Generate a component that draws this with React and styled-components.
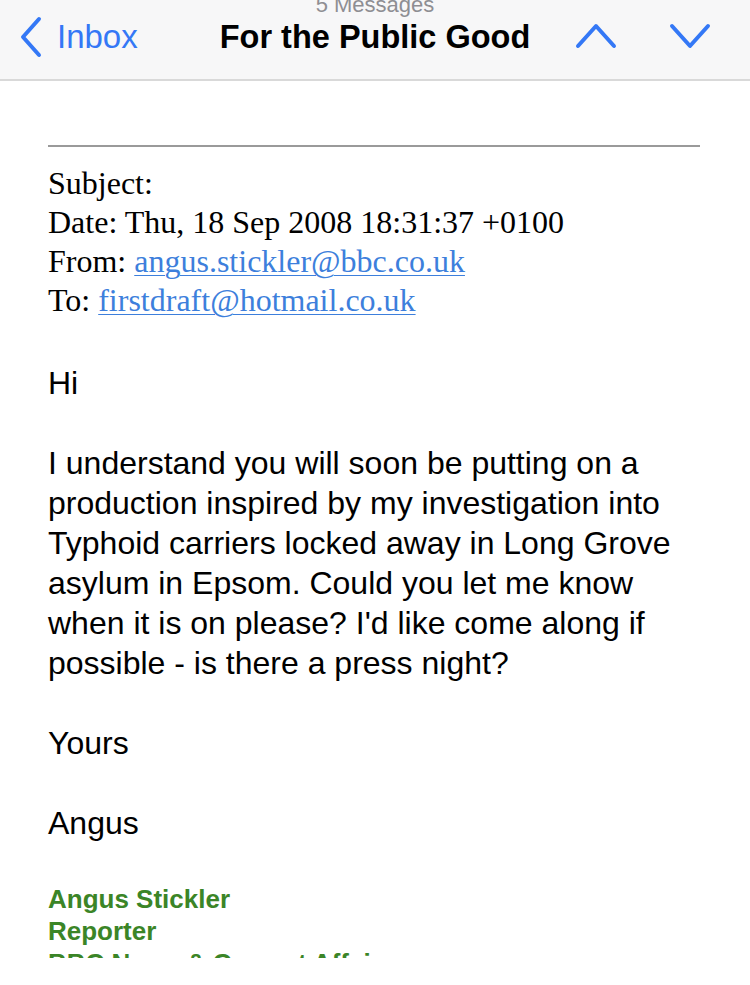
import React from 'react';
import styled, { createGlobalStyle } from 'styled-components';

const GlobalStyle = createGlobalStyle`
  html, body {
    margin: 0;
    padding: 0;
    background: #ffffff;
  }
`;

const Chevron = ({ dir }) => {
  const paths = {
    left: 'M22 4 L6 22 L22 40',
    up: 'M3 24 L21 4 L39 24',
    down: 'M3 4 L21 24 L39 4',
  };
  const size = dir === 'left' ? { w: 26, h: 44 } : { w: 42, h: 28 };
  return (
    <svg width={size.w} height={size.h} viewBox={`0 0 ${size.w} ${size.h}`}>
      <path
        d={paths[dir]}
        fill="none"
        stroke="#3478f6"
        strokeWidth="4"
        strokeLinecap="round"
        strokeLinejoin="round"
      />
    </svg>
  );
};

const App = () => {
  return (
    <Page>
      <GlobalStyle />
      <NavBar>
        <BackButton>
          <Chevron dir="left" />
          <BackLabel>Inbox</BackLabel>
        </BackButton>
        <TitleBlock>
          <Count>5 Messages</Count>
          <Title>For the Public Good</Title>
        </TitleBlock>
        <Arrows>
          <Chevron dir="up" />
          <Chevron dir="down" />
        </Arrows>
      </NavBar>

      <Mail>
        <Rule />
        <Headers>
          <div>Subject:</div>
          <div>Date: Thu, 18 Sep 2008 18:31:37 +0100</div>
          <div>
            From: <MailLink>angus.stickler@bbc.co.uk</MailLink>
          </div>
          <div>
            To: <MailLink>firstdraft@hotmail.co.uk</MailLink>
          </div>
        </Headers>

        <Body>
          <Para>Hi</Para>
          <Para>
            I understand you will soon be putting on a<br />
            production inspired by my investigation into<br />
            Typhoid carriers locked away in Long Grove<br />
            asylum in Epsom. Could you let me know<br />
            when it is on please? I'd like come along if<br />
            possible - is there a press night?
          </Para>
          <Para>Yours</Para>
          <Para>Angus</Para>
        </Body>

        <Signature>
          <div>Angus Stickler</div>
          <div>Reporter</div>
          <div>BBC News &amp; Current Affairs</div>
        </Signature>
      </Mail>
    </Page>
  );
};

export default App;

const Page = styled.div`
  width: 750px;
  min-height: 985px;
  background: #ffffff;
`;

const NavBar = styled.div`
  height: 79px;
  display: grid;
  grid-template-columns: 1fr auto 1fr;
  align-items: start;
  background: #f7f7f8;
  border-bottom: 2px solid #d9d9d9;
  overflow: hidden;
  font-family: 'Liberation Sans', Arial, sans-serif;
`;

const BackButton = styled.div`
  display: flex;
  align-items: center;
  gap: 14px;
  padding: 15px 0 0 17px;
`;

const BackLabel = styled.span`
  font-size: 33px;
  color: #3478f6;
  line-height: 40px;
`;

const TitleBlock = styled.div`
  display: flex;
  flex-direction: column;
  align-items: center;
  margin-top: -6px;
`;

const Count = styled.div`
  font-size: 22px;
  line-height: 22px;
  color: #8e8e93;
`;

const Title = styled.div`
  font-size: 32.5px;
  font-weight: bold;
  color: #000;
  line-height: 40px;
  margin-top: 1px;
`;

const Arrows = styled.div`
  display: flex;
  justify-content: flex-end;
  gap: 52px;
  padding: 22px 39px 0 0;
`;

const Mail = styled.div`
  padding: 0 50px 0 48px;
`;

const Rule = styled.div`
  margin-top: 64px;
  height: 2px;
  background: #9a9a9a;
`;

const Headers = styled.div`
  margin-top: 17px;
  font-family: 'Liberation Serif', 'Times New Roman', serif;
  font-size: 32px;
  line-height: 39px;
  color: #000;
`;

const MailLink = styled.span`
  color: #3d7fdc;
  text-decoration: underline;
  text-decoration-thickness: 1px;
  text-underline-offset: 3px;
`;

const Body = styled.div`
  margin-top: 43px;
  font-family: 'Liberation Sans', Arial, sans-serif;
  font-size: 32px;
  line-height: 40px;
  color: #000;
  display: flex;
  flex-direction: column;
  gap: 40px;
`;

const Para = styled.div``;

const Signature = styled.div`
  margin-top: 40px;
  height: 75px;
  overflow: hidden;
  font-family: 'Liberation Sans', Arial, sans-serif;
  font-size: 26px;
  font-weight: bold;
  line-height: 32px;
  color: #3b8527;
`;
